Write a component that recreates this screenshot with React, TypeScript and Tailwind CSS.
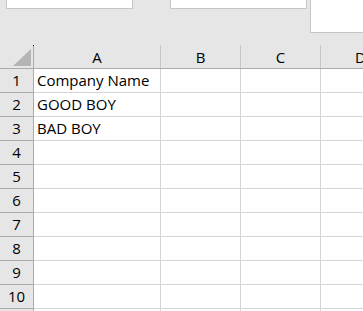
const cols = [
  { name: "A", w: "w-[127px]" },
  { name: "B", w: "w-[80px]" },
  { name: "C", w: "w-[80px]" },
  { name: "D", w: "w-[80px]" },
];

const data: Record<number, string> = {
  1: "Company Name",
  2: "GOOD BOY",
  3: "BAD BOY",
};

const rows = [1, 2, 3, 4, 5, 6, 7, 8, 9, 10];

export default function App() {
  return (
    <div className="w-[363px] h-[311px] overflow-hidden bg-[#e6e6e6] text-black font-['Open_Sans',sans-serif] text-[15px]">
      {/* ribbon bits cut off at the top */}
      <div className="flex h-[45px] items-start">
        <div className="ml-[6px] w-[127px] h-[9px] bg-white border border-t-0 border-[#c6c6c6]" />
        <div className="ml-[37px] w-[137px] h-[9px] bg-white border border-t-0 border-[#c6c6c6]" />
        <div className="ml-[3px] flex-1 h-[33px] bg-white border border-t-0 border-r-0 border-[#c6c6c6]" />
      </div>

      {/* column headers */}
      <div className="flex h-[24px] border-b border-[#ababab]">
        <div className="relative w-[34px] shrink-0 border-r border-[#ababab] flex items-end justify-end pr-[2px] pb-[2px]">
          <svg width="18" height="17" viewBox="0 0 18 17">
            <polygon points="0,17 18,17 18,0" fill="#b4b4b4" />
          </svg>
          <span className="absolute right-[-1px] top-0 w-px h-px bg-black" />
        </div>
        {cols.map((c) => (
          <div
            key={c.name}
            className={`${c.w} shrink-0 border-r border-[#c6c6c6] flex items-center justify-center leading-none pt-[1px]`}
          >
            {c.name}
          </div>
        ))}
      </div>

      {/* rows */}
      {rows.map((r) => (
        <div key={r} className="flex h-[24px]">
          <div className="w-[34px] shrink-0 border-r border-b border-[#ababab] flex items-center justify-center leading-none">
            {r}
          </div>
          {cols.map((c, i) => (
            <div
              key={c.name}
              className={`${c.w} shrink-0 bg-white border-r border-b border-[#d4d4d4] flex items-center pl-[3px] leading-none whitespace-nowrap`}
            >
              {i === 0 ? data[r] ?? "" : ""}
            </div>
          ))}
        </div>
      ))}
      {/* partial next row */}
      <div className="flex h-[24px]">
        <div className="w-[34px] shrink-0 border-r border-[#ababab]" />
        {cols.map((c) => (
          <div key={c.name} className={`${c.w} shrink-0 bg-white border-r border-[#d4d4d4]`} />
        ))}
      </div>
    </div>
  );
}
